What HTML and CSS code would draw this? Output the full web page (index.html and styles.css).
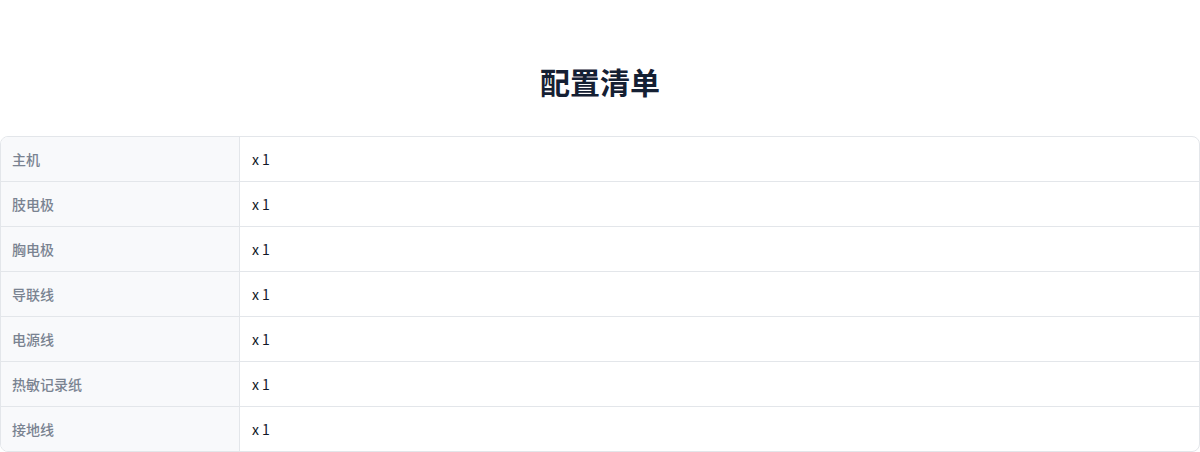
FILE: index.html
```html
<!DOCTYPE html>
<html lang="zh">
<head>
<meta charset="utf-8">
<link rel="stylesheet" href="styles.css">
</head>
<body>
<section class="config">
  <h2 class="title">配置清单</h2>
  <div class="table">
    <div class="row"><div class="label">主机</div><div class="value">x 1</div></div>
    <div class="row"><div class="label">肢电极</div><div class="value">x 1</div></div>
    <div class="row"><div class="label">胸电极</div><div class="value">x 1</div></div>
    <div class="row"><div class="label">导联线</div><div class="value">x 1</div></div>
    <div class="row"><div class="label">电源线</div><div class="value">x 1</div></div>
    <div class="row"><div class="label">热敏记录纸</div><div class="value">x 1</div></div>
    <div class="row"><div class="label">接地线</div><div class="value">x 1</div></div>
  </div>
</section>
</body>
</html>
```
FILE: styles.css
```css
html, body {
  margin: 0;
  padding: 0;
  background: #ffffff;
  font-family: "Noto Sans CJK SC", "Noto Sans", sans-serif;
}
.config {
  padding-top: 58px;
}
.title {
  margin: 0 0 32px;
  text-align: center;
  font-size: 30px;
  line-height: 46px;
  font-weight: 700;
  color: #152033;
}
.table {
  border: 1px solid #e3e6ea;
  border-radius: 8px;
  overflow: hidden;
}
.row {
  display: grid;
  grid-template-columns: 239px 1fr;
  height: 44px;
  border-bottom: 1px solid #e3e6ea;
}
.row:last-child {
  border-bottom: none;
}
.label {
  background: #f8f9fb;
  border-right: 1px solid #e3e6ea;
  padding: 0 12px 0 11px;
  display: flex;
  align-items: center;
  font-size: 14px;
  font-weight: 500;
  color: #7a8391;
}
.value {
  padding: 0 12px;
  display: flex;
  align-items: center;
  font-size: 14px;
  color: #111827;
}
```
